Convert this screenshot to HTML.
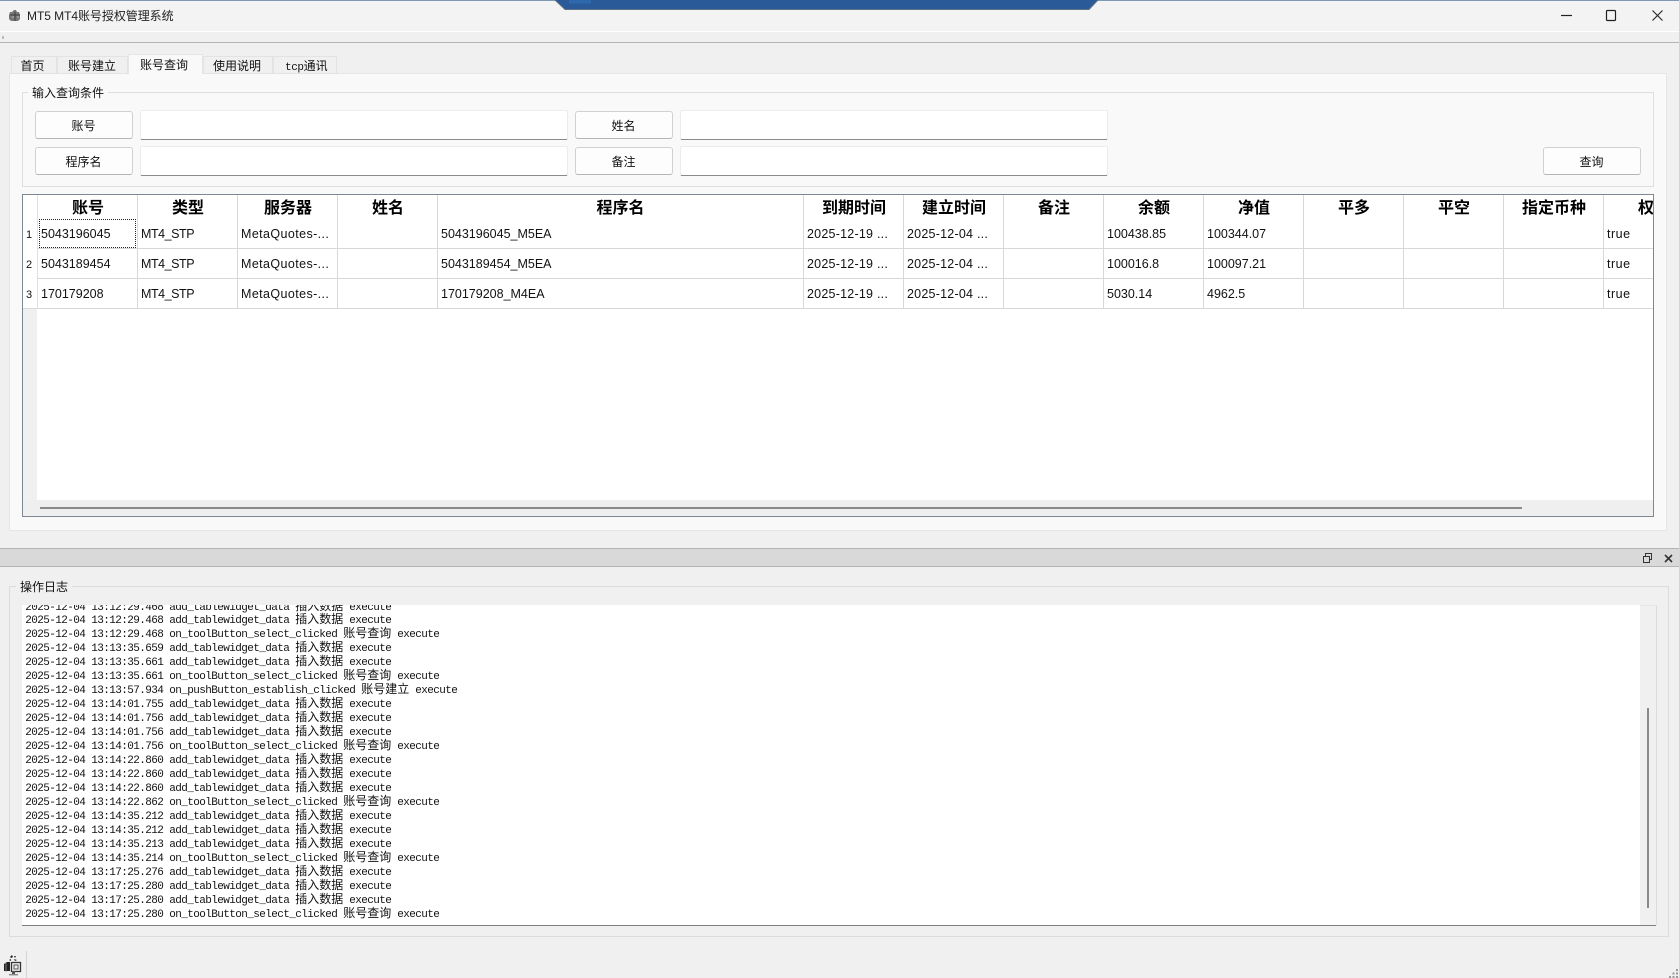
<!DOCTYPE html>
<html lang="zh"><head><meta charset="utf-8"><title>MT5 MT4账号授权管理系统</title>
<style>
html,body{margin:0;padding:0;background:#f0f0f0}
body{position:relative;width:1679px;height:978px;overflow:hidden;font:12px/16px "Liberation Sans","Noto Sans CJK SC",sans-serif;color:#111}
div,svg,span.a{position:absolute;box-sizing:border-box}
.t{white-space:nowrap;margin-top:1px}
.tab{top:56px;height:18px;background:#f0f0f0;border:1px solid #e3e3e3;border-bottom:1px solid #e3e3e3}
.tl{top:57px;margin-top:1px;white-space:nowrap;font-size:12px;line-height:16px}
.btn{background:#fdfdfd;border:1px solid #d0d0d0;border-bottom-color:#b5b5b5;border-radius:3px;text-align:center;line-height:28px;font-size:12px;text-indent:-1px}
.inp{background:#fff;border:1px solid #ececec;border-bottom:1px solid #8a8a8a;border-radius:2px}
.vl{width:1px;top:195px;height:114px;background:#d8d8d8}
.hl{left:37px;height:1px;width:1616px;background:#d8d8d8}
.th{top:199px;width:100px;text-align:center;font-weight:700;font-size:16px;line-height:20px;color:#000;white-space:nowrap}
.c{font-size:12.5px;line-height:16px;white-space:nowrap;color:#111;margin-top:1px}
.m{letter-spacing:-.45px}.q{letter-spacing:.4px}.d{letter-spacing:.23px}.r{letter-spacing:.5px}
.n{left:26px;font-size:11px;line-height:16px;color:#111;margin-top:1px}
#log{left:22px;top:605px;width:1618px;height:320px;background:#fff;overflow:hidden}
#log p{margin:0;position:absolute;left:3.2px;height:14px;font:11px/14px "Liberation Mono",monospace;letter-spacing:-.6px;white-space:pre;color:#111}
#log b{font:400 12px/14px "Noto Sans CJK SC","Liberation Sans",sans-serif;letter-spacing:0}
</style></head><body>

<div style="left:0;top:0;width:1679px;height:31px;background:#f3f3f3"></div>
<div style="left:0;top:0;width:1679px;height:1px;background:#7d9ab5"></div>
<div style="left:0;top:31px;width:1679px;height:1px;background:#fff"></div>
<div style="left:0;top:42px;width:1679px;height:1px;background:#b4b4b4"></div>
<svg style="left:555px;top:0" width="544" height="10"><path d="M0 0L10 9.5H534L543 0Z" fill="#2a5a98"/><path d="M0 0L10 9.5H534L543 0" fill="none" stroke="#5f7385" stroke-width="1"/><rect x="14" y="0" width="22" height="3.5" fill="#2f69ad"/></svg>

<svg style="left:8px;top:9px" width="14" height="13"><path d="M6 1h2l1 2h2l1 3v4l-2 2H3L1 10V6l1-3h2z" fill="#777"/><path d="M2 6h10M7 3v9" stroke="#3f3f3f" stroke-width="1"/><path d="M4 8h2M9 8h2" stroke="#bbb" stroke-width="1"/></svg>
<div class="t" style="left:27px;top:7px;font-size:12px;letter-spacing:-.05px;color:#222">MT5 MT4账号授权管理系统</div>
<svg style="left:1555px;top:5px" width="120" height="20"><path d="M6 10.5H17" stroke="#222" stroke-width="1.2"/><rect x="51.5" y="5.5" width="9" height="10" rx="1" fill="none" stroke="#222" stroke-width="1.2"/><path d="M97.5 5.5l10 10M107.5 5.5l-10 10" stroke="#222" stroke-width="1.1"/></svg>
<div style="left:2px;top:36px;width:2px;height:3px;background:#bbb"></div>

<!-- tab pane -->
<div style="left:9px;top:73px;width:1658px;height:458px;background:#f9f9f9;border:1px solid #e6e6e6"></div>
<div class="tab" style="left:11px;width:46px"></div>
<div class="tab" style="left:57px;width:71px"></div>
<div class="tab" style="left:203px;width:70px"></div>
<div class="tab" style="left:273px;width:64px"></div>
<div style="left:128px;top:54px;width:75px;height:20px;background:#f9f9f9;border:1px solid #e6e6e6;border-bottom:0"></div>
<div class="tl" style="left:20.5px">首页</div>
<div class="tl" style="left:68px">账号建立</div>
<div class="tl" style="left:140px;top:56px">账号查询</div>
<div class="tl" style="left:213px">使用说明</div>
<div class="tl" style="left:285px;font-family:'Liberation Mono','Noto Sans CJK SC',monospace;font-size:11px;letter-spacing:-.4px">tcp<span style="font-size:12px;font-family:'Noto Sans CJK SC';letter-spacing:0">通讯</span></div>

<!-- query group -->
<div style="left:22px;top:92px;width:1632px;height:95px;border:1px solid #dedede;border-radius:1px"></div>
<div class="t" style="left:28px;top:84px;padding:0 4px;background:#f9f9f9;font-size:12px">输入查询条件</div>
<div class="btn" style="left:35px;top:111px;width:98px;height:28px">账号</div>
<div class="inp" style="left:140px;top:110px;width:428px;height:30px"></div>
<div class="btn" style="left:575px;top:111px;width:98px;height:28px">姓名</div>
<div class="inp" style="left:680px;top:110px;width:428px;height:30px"></div>
<div class="btn" style="left:35px;top:147px;width:98px;height:28px">程序名</div>
<div class="inp" style="left:140px;top:146px;width:428px;height:30px"></div>
<div class="btn" style="left:575px;top:147px;width:98px;height:28px">备注</div>
<div class="inp" style="left:680px;top:146px;width:428px;height:30px"></div>
<div class="btn" style="left:1543px;top:147px;width:98px;height:28px">查询</div>

<!-- table -->
<div style="left:22px;top:194px;width:1632px;height:323px;background:#fff;border:1px solid #7d8894;overflow:hidden">
</div>
<div style="left:23px;top:195px;width:14px;height:305px;background:#f0f0f0"></div>
<div style="left:23px;top:195px;width:14px;height:114px;background:#fff"></div>
<div style="left:23px;top:500px;width:1630px;height:16px;background:#efefef"></div>
<div style="left:40px;top:507px;width:1482px;height:2px;background:#8a8a8a"></div>
<div style="left:37px;top:195px;width:1px;height:114px;background:#e0e0e0"></div>
<div class="vl" style="left:137px"></div><div class="vl" style="left:237px"></div><div class="vl" style="left:337px"></div><div class="vl" style="left:437px"></div><div class="vl" style="left:803px"></div><div class="vl" style="left:903px"></div><div class="vl" style="left:1003px"></div><div class="vl" style="left:1103px"></div><div class="vl" style="left:1203px"></div><div class="vl" style="left:1303px"></div><div class="vl" style="left:1403px"></div><div class="vl" style="left:1503px"></div><div class="vl" style="left:1603px"></div>
<div class="hl" style="top:248px"></div><div class="hl" style="top:278px"></div><div class="hl" style="top:308px"></div>
<div style="left:23px;top:308px;width:14px;height:1px;background:#d8d8d8"></div>

<div class="th" style="left:38px">账号</div><div class="th" style="left:138px">类型</div><div class="th" style="left:238px">服务器</div><div class="th" style="left:338px">姓名</div><div class="th" style="left:438px;width:365px">程序名</div><div class="th" style="left:804px">到期时间</div><div class="th" style="left:904px">建立时间</div><div class="th" style="left:1004px">备注</div><div class="th" style="left:1104px">余额</div><div class="th" style="left:1204px">净值</div><div class="th" style="left:1304px">平多</div><div class="th" style="left:1404px">平空</div><div class="th" style="left:1504px">指定币种</div>
<div style="left:1604px;top:195px;width:49px;height:25px;overflow:hidden"><div class="th" style="left:0;top:4px">权限</div></div>

<div style="left:39px;top:219px;width:97px;height:29px;border:1px dotted #222"></div>

<div class="n" style="top:226px">1</div><div class="n" style="top:256px">2</div><div class="n" style="top:286px">3</div>

<div class="c" style="left:41px;top:225px">5043196045</div><div class="c m" style="left:141px;top:225px">MT4_STP</div><div class="c q" style="left:241px;top:225px">MetaQuotes-...</div><div class="c" style="left:441px;top:225px">5043196045_M5EA</div><div class="c d" style="left:807px;top:225px">2025-12-19 ...</div><div class="c d" style="left:907px;top:225px">2025-12-04 ...</div><div class="c" style="left:1107px;top:225px">100438.85</div><div class="c" style="left:1207px;top:225px">100344.07</div><div class="c r" style="left:1607px;top:225px">true</div>
<div class="c" style="left:41px;top:255px">5043189454</div><div class="c m" style="left:141px;top:255px">MT4_STP</div><div class="c q" style="left:241px;top:255px">MetaQuotes-...</div><div class="c" style="left:441px;top:255px">5043189454_M5EA</div><div class="c d" style="left:807px;top:255px">2025-12-19 ...</div><div class="c d" style="left:907px;top:255px">2025-12-04 ...</div><div class="c" style="left:1107px;top:255px">100016.8</div><div class="c" style="left:1207px;top:255px">100097.21</div><div class="c r" style="left:1607px;top:255px">true</div>
<div class="c" style="left:41px;top:285px">170179208</div><div class="c m" style="left:141px;top:285px">MT4_STP</div><div class="c q" style="left:241px;top:285px">MetaQuotes-...</div><div class="c" style="left:441px;top:285px">170179208_M4EA</div><div class="c d" style="left:807px;top:285px">2025-12-19 ...</div><div class="c d" style="left:907px;top:285px">2025-12-04 ...</div><div class="c" style="left:1107px;top:285px">5030.14</div><div class="c" style="left:1207px;top:285px">4962.5</div><div class="c r" style="left:1607px;top:285px">true</div>

<!-- dock title -->
<div style="left:0;top:548px;width:1679px;height:19px;background:#d9d9d9;border-top:1px solid #b4b4b4;border-bottom:1px solid #b4b4b4"></div>
<svg style="left:1642px;top:552px" width="32" height="12"><rect x="3.5" y="1.5" width="6" height="6" fill="none" stroke="#333"/><rect x="1.5" y="4.5" width="6" height="6" fill="#d9d9d9" stroke="#333"/><path d="M23 3l7 7M30 3l-7 7" stroke="#333" stroke-width="1.6"/></svg>

<!-- log group -->
<div style="left:9px;top:586px;width:1660px;height:351px;border:1px solid #dcdcdc"></div>
<div class="t" style="left:16px;top:578px;padding:0 4px;background:#f0f0f0;font-size:12px">操作日志</div>
<div style="left:1640px;top:605px;width:17px;height:320px;background:#f0f0f0;border-right:1px solid #dcdcdc;border-top:1px solid #e6e6e6"></div>
<div style="left:1647px;top:708px;width:2px;height:200px;background:#8a8a8a"></div>
<div style="left:22px;top:925px;width:1634px;height:1px;background:#7f7f7f"></div>
<div id="log">
<p style="top:-6px">2025-12-04 13:12:29.468 add_tablewidget_data <b>插入数据</b> execute</p>
<p style="top:7px">2025-12-04 13:12:29.468 add_tablewidget_data <b>插入数据</b> execute</p>
<p style="top:21px">2025-12-04 13:12:29.468 on_toolButton_select_clicked <b>账号查询</b> execute</p>
<p style="top:35px">2025-12-04 13:13:35.659 add_tablewidget_data <b>插入数据</b> execute</p>
<p style="top:49px">2025-12-04 13:13:35.661 add_tablewidget_data <b>插入数据</b> execute</p>
<p style="top:63px">2025-12-04 13:13:35.661 on_toolButton_select_clicked <b>账号查询</b> execute</p>
<p style="top:77px">2025-12-04 13:13:57.934 on_pushButton_establish_clicked <b>账号建立</b> execute</p>
<p style="top:91px">2025-12-04 13:14:01.755 add_tablewidget_data <b>插入数据</b> execute</p>
<p style="top:105px">2025-12-04 13:14:01.756 add_tablewidget_data <b>插入数据</b> execute</p>
<p style="top:119px">2025-12-04 13:14:01.756 add_tablewidget_data <b>插入数据</b> execute</p>
<p style="top:133px">2025-12-04 13:14:01.756 on_toolButton_select_clicked <b>账号查询</b> execute</p>
<p style="top:147px">2025-12-04 13:14:22.860 add_tablewidget_data <b>插入数据</b> execute</p>
<p style="top:161px">2025-12-04 13:14:22.860 add_tablewidget_data <b>插入数据</b> execute</p>
<p style="top:175px">2025-12-04 13:14:22.860 add_tablewidget_data <b>插入数据</b> execute</p>
<p style="top:189px">2025-12-04 13:14:22.862 on_toolButton_select_clicked <b>账号查询</b> execute</p>
<p style="top:203px">2025-12-04 13:14:35.212 add_tablewidget_data <b>插入数据</b> execute</p>
<p style="top:217px">2025-12-04 13:14:35.212 add_tablewidget_data <b>插入数据</b> execute</p>
<p style="top:231px">2025-12-04 13:14:35.213 add_tablewidget_data <b>插入数据</b> execute</p>
<p style="top:245px">2025-12-04 13:14:35.214 on_toolButton_select_clicked <b>账号查询</b> execute</p>
<p style="top:259px">2025-12-04 13:17:25.276 add_tablewidget_data <b>插入数据</b> execute</p>
<p style="top:273px">2025-12-04 13:17:25.280 add_tablewidget_data <b>插入数据</b> execute</p>
<p style="top:287px">2025-12-04 13:17:25.280 add_tablewidget_data <b>插入数据</b> execute</p>
<p style="top:301px">2025-12-04 13:17:25.280 on_toolButton_select_clicked <b>账号查询</b> execute</p>
</div>

<!-- status bar -->
<div style="left:26px;top:951px;width:1px;height:27px;background:#d4d4d4"></div>
<svg style="left:3px;top:954px" width="20" height="22"><path d="M7 3l2-2 1 2-2 1zM11 2l2 0-1 2zM6 6l2-1 0 2zM11 5l3 1-2 1z" fill="#222"/><path d="M1 10l3-2h3v9H1z" fill="#222"/><path d="M3 9v9" stroke="#999" stroke-width=".8"/><path d="M8.5 8.5h9v9h-9z" fill="none" stroke="#333" stroke-width="1.3"/><path d="M11 11h4v4h-4z" fill="none" stroke="#555" stroke-width="1"/><path d="M6 20h9v1.4H6z" fill="#8a8a8a"/><path d="M9 17h3v3H9z" fill="#555"/></svg>
<svg style="left:1669px;top:968px" width="10" height="10"><g fill="#999"><rect x="7" y="1" width="2" height="2"/><rect x="3.5" y="4.5" width="2" height="2"/><rect x="7" y="4.5" width="2" height="2"/><rect x="0" y="8" width="2" height="2"/><rect x="3.5" y="8" width="2" height="2"/><rect x="7" y="8" width="2" height="2"/></g></svg>
</body></html>
